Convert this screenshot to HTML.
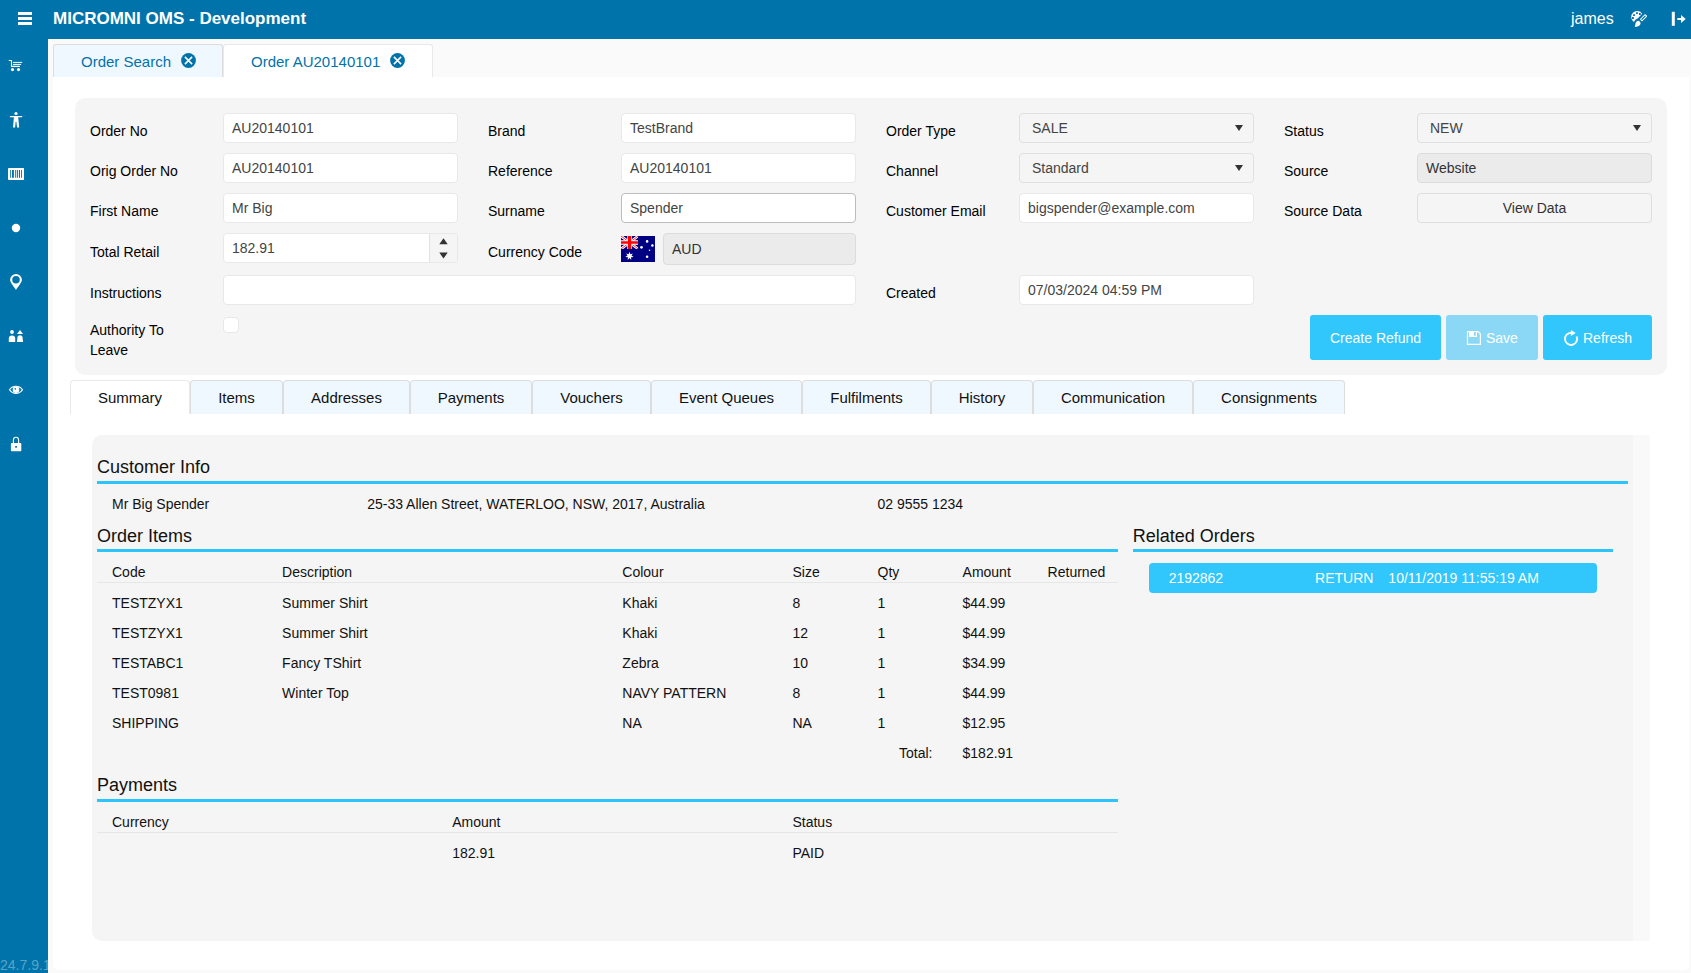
<!DOCTYPE html>
<html>
<head>
<meta charset="utf-8">
<title>MICROMNI OMS - Development</title>
<style>
*{box-sizing:border-box;margin:0;padding:0}
html,body{width:1691px;height:973px;overflow:hidden}
body{font-family:"Liberation Sans",sans-serif;font-size:14px;color:#000;background:#fafafa;position:relative}
.abs{position:absolute}
#hdr{position:absolute;left:0;top:0;width:1691px;height:39px;background:#0073aa}
#side{position:absolute;left:0;top:0;width:48px;height:973px;background:#0073aa;overflow:hidden}
#title{position:absolute;left:53px;top:9px;font-size:17px;font-weight:700;color:#fff;line-height:20px;white-space:nowrap}
#user{position:absolute;left:1571px;top:9px;font-size:16px;color:#fff;line-height:20px}
#ver{position:absolute;left:0;top:957px;font-size:14px;line-height:16px;color:rgba(255,255,255,.36);white-space:nowrap}
#panel{position:absolute;left:53px;top:77px;width:1636px;height:893px;background:#fff;border-radius:0 0 5px 5px}
.ttab{position:absolute;top:44px;height:33px;border:1px solid #ddd;border-bottom:none;border-radius:3px 3px 0 0;background:#f0f8ff;color:#0073aa;font-size:15px;line-height:18px;white-space:nowrap}
.ttab span{position:absolute;left:27px;top:8px}
.ttab svg{position:absolute;top:8px}
.ttab.act{background:#fff;border-color:#e9e9e9}
#fbox{position:absolute;left:75px;top:98px;width:1592px;height:277px;background:#f5f5f5;border-radius:10px}
.lbl{position:absolute;font-size:14px;line-height:20px;color:#000;white-space:nowrap}
.inp{position:absolute;height:30px;border:1px solid #e8e8e8;border-radius:4px;background:#fff;font-size:14px;line-height:20px;color:#444;padding:4px 8px;white-space:nowrap;overflow:hidden}
.inp.dis{background:#ebebeb;border-color:#dcdcdc;color:#333}
.inp.sel{background:#f5f5f5;border-color:#e0e0e0;padding-left:12px}
.inp.sel:after{content:"";position:absolute;right:10px;top:11px;border:4px solid transparent;border-top:6px solid #333;border-bottom:none}
.btn{position:absolute;top:315px;height:45px;background:#31c6fc;color:#fff;font-size:14px;line-height:47px;border-radius:3px;white-space:nowrap}
.btn.disb{background:#8ad8f6}
.stab{position:absolute;top:380px;height:34px;border:1px solid #ddd;border-bottom:none;border-radius:4px 4px 0 0;background:#f0f8ff;color:#111;font-size:15px;line-height:18px;text-align:center;padding-top:8px;white-space:nowrap}
.stab.act{background:#fff;border-color:#e9e9e9}
#sbox{position:absolute;left:92px;top:435px;width:1541px;height:506px;background:#f5f5f5;border-radius:10px 0 0 10px}
#strack{position:absolute;left:1633px;top:435px;width:17px;height:506px;background:#f9f9f9}
.h{position:absolute;font-size:18px;line-height:22px;color:#111;white-space:nowrap}
.bl{position:absolute;height:3px;background:#2dc4fb}
.gl{position:absolute;height:1px;background:#e6e6e6}
.t{position:absolute;font-size:14px;line-height:20px;color:#111;white-space:nowrap}
#rel{position:absolute;left:1148.67px;top:563px;width:448.33px;height:30px;background:#31c6fc;border-radius:4px;color:#fff}
#rel span{position:absolute;top:5px;font-size:14px;line-height:20px;white-space:nowrap}
</style>
</head>
<body>
<div id="hdr"></div>
<div id="side">
<div id="ver">24.7.9.1</div>
</div>
<div id="title">MICROMNI OMS - Development</div>
<div id="user">james</div>
<div id="panel"></div>
<div class="ttab" style="left:53px;width:170px"><span>Order Search</span><svg style="left:126.5px" width="15" height="15" viewBox="0 0 15 15"><circle cx="7.5" cy="7.5" r="7.4" fill="#0073aa"/><path d="M3.9 3.9 L11.1 11.1 M11.1 3.9 L3.9 11.1" stroke="#fff" stroke-width="1.55" fill="none"/></svg></div>
<div class="ttab act" style="left:223px;width:210px"><span>Order AU20140101</span><svg style="left:166px" width="15" height="15" viewBox="0 0 15 15"><circle cx="7.5" cy="7.5" r="7.4" fill="#0073aa"/><path d="M3.9 3.9 L11.1 11.1 M11.1 3.9 L3.9 11.1" stroke="#fff" stroke-width="1.55" fill="none"/></svg></div>

<div id="fbox"></div>
<div class="lbl" style="left:90px;top:121px">Order No</div>
<div class="lbl" style="left:488px;top:121px">Brand</div>
<div class="lbl" style="left:886px;top:121px">Order Type</div>
<div class="lbl" style="left:1284px;top:121px">Status</div>
<div class="lbl" style="left:90px;top:161px">Orig Order No</div>
<div class="lbl" style="left:488px;top:161px">Reference</div>
<div class="lbl" style="left:886px;top:161px">Channel</div>
<div class="lbl" style="left:1284px;top:161px">Source</div>
<div class="lbl" style="left:90px;top:201px">First Name</div>
<div class="lbl" style="left:488px;top:201px">Surname</div>
<div class="lbl" style="left:886px;top:201px">Customer Email</div>
<div class="lbl" style="left:1284px;top:201px">Source Data</div>
<div class="inp " style="left:223px;top:113px;width:235px;">AU20140101</div>
<div class="inp " style="left:621px;top:113px;width:235px;">TestBrand</div>
<div class="inp sel" style="left:1019px;top:113px;width:235px;">SALE</div>
<div class="inp sel" style="left:1417px;top:113px;width:235px;">NEW</div>
<div class="inp " style="left:223px;top:153px;width:235px;">AU20140101</div>
<div class="inp " style="left:621px;top:153px;width:235px;">AU20140101</div>
<div class="inp sel" style="left:1019px;top:153px;width:235px;">Standard</div>
<div class="inp dis" style="left:1417px;top:153px;width:235px;">Website</div>
<div class="inp " style="left:223px;top:193px;width:235px;">Mr Big</div>
<div class="inp " style="left:621px;top:193px;width:235px;border-color:#bdbdbd">Spender</div>
<div class="inp " style="left:1019px;top:193px;width:235px;">bigspender@example.com</div>
<div class="inp " style="left:1417px;top:193px;width:235px;background:#f5f5f5;border-color:#dedede;text-align:center;color:#333">View Data</div>
<div class="lbl" style="left:90px;top:242px">Total Retail</div>
<div class="lbl" style="left:488px;top:242px">Currency Code</div>
<div class="inp" style="left:223px;top:233px;width:235px;padding-top:4px">182.91<div style="position:absolute;right:0;top:0;width:28px;height:28px;background:#f5f5f5;border-left:1px solid #e2e2e2"><svg style="position:absolute;left:8.6px;top:4px" width="9" height="21" viewBox="0 0 9 21"><path d="M0.3 6.2 L4.5 0.3 L8.7 6.2 Z M0.3 14.6 L8.7 14.6 L4.5 20.5 Z" fill="#333"/></svg></div></div>
<svg class="abs" style="left:621px;top:236px" width="34" height="26" viewBox="0 0 34 26"><rect width="34" height="26" fill="#000082"/>
<svg x="0" y="0" width="17.2" height="13" viewBox="0 0 17.2 13"><path d="M0 0 L17.2 13 M17.2 0 L0 13" stroke="#fff" stroke-width="2.6"/><path d="M0 0 L17.2 13 M17.2 0 L0 13" stroke="#ff1a1a" stroke-width="0.9"/><path d="M8.6 0 V13 M0 6.5 H17.2" stroke="#fff" stroke-width="4.6"/><path d="M8.6 0 V13" stroke="#ff0000" stroke-width="3.3"/><path d="M0 6.5 H17.2" stroke="#ff0000" stroke-width="2.7"/></svg>
<path d="M8.5 15.8 l0.9 2.5 2.5-0.9-1.4 2.2 2.2 1.4-2.7 0.3 0.3 2.7-1.8-2-1.8 2 0.3-2.7-2.7-0.3 2.2-1.4-1.4-2.2 2.5 0.9 Z" fill="#fff"/>
<circle cx="26.1" cy="5.4" r="1.3" fill="#fff"/><circle cx="31.4" cy="9.6" r="1.25" fill="#fff"/><circle cx="20.5" cy="11.3" r="1.35" fill="#fff"/><circle cx="28.5" cy="14.2" r="0.75" fill="#fff"/><circle cx="26.1" cy="20.8" r="1.3" fill="#fff"/></svg>
<div class="inp dis" style="left:663px;top:233px;width:193px;height:32px;padding-top:5px">AUD</div>
<div class="lbl" style="left:90px;top:283px">Instructions</div>
<div class="inp " style="left:223px;top:275px;width:633px;"></div>
<div class="lbl" style="left:886px;top:283px">Created</div>
<div class="inp " style="left:1019px;top:275px;width:235px;">07/03/2024 04:59 PM</div>
<div class="lbl" style="left:90px;top:320px">Authority To</div>
<div class="lbl" style="left:90px;top:340px">Leave</div>
<div class="abs" style="left:223px;top:317px;width:16px;height:16px;background:#fff;border:1px solid #e8e8e8;border-radius:4px"></div>
<div class="btn" style="left:1310px;width:131px;padding-left:20px">Create Refund</div>
<div class="btn disb" style="left:1446px;width:92px;padding-left:40px"><svg class="abs" style="left:20px;top:15px" width="16" height="16" viewBox="0 0 16 16"><path d="M1.5 1.5 H12 L14.4 3.9 V14.4 H1.5 Z" stroke="#fff" stroke-width="1.2" fill="none" stroke-linejoin="round"/><path d="M3.1 1.5 H11 V7 H3.1 Z M8 2.1 V5.8 H9.8 V2.1 Z" fill="#fff" fill-rule="evenodd"/></svg>Save</div>
<div class="btn" style="left:1543px;width:109px;padding-left:40px"><svg class="abs" style="left:19px;top:14px" width="18" height="18" viewBox="0 0 18 18"><path d="M9.4 3.85 A6.05 6.05 0 1 0 14.6 7.5" stroke="#fff" stroke-width="1.9" fill="none"/><path d="M8.9 1.1 L13.7 3.9 L8.9 7 Z" fill="#fff"/></svg>Refresh</div>
<div class="stab act" style="left:70px;width:120px">Summary</div>
<div class="stab" style="left:190px;width:93px">Items</div>
<div class="stab" style="left:283px;width:127px">Addresses</div>
<div class="stab" style="left:410px;width:122px">Payments</div>
<div class="stab" style="left:532px;width:119px">Vouchers</div>
<div class="stab" style="left:651px;width:151px">Event Queues</div>
<div class="stab" style="left:802px;width:129px">Fulfilments</div>
<div class="stab" style="left:931px;width:102px">History</div>
<div class="stab" style="left:1033px;width:160px">Communication</div>
<div class="stab" style="left:1193px;width:152px">Consignments</div>
<div id="sbox"></div><div id="strack"></div>
<div class="h" style="left:97px;top:456px">Customer Info</div>
<div class="bl" style="left:97px;top:481px;width:1531px"></div>
<div class="t" style="left:112px;top:494px;">Mr Big Spender</div>
<div class="t" style="left:367.17px;top:494px;">25-33 Allen Street, WATERLOO, NSW, 2017, Australia</div>
<div class="t" style="left:877.50px;top:494px;">02 9555 1234</div>
<div class="h" style="left:97px;top:525px">Order Items</div>
<div class="bl" style="left:97px;top:549px;width:1020.67px"></div>
<div class="h" style="left:1132.67px;top:525px">Related Orders</div>
<div class="bl" style="left:1132.67px;top:549px;width:480.33px"></div>
<div class="t" style="left:112px;top:562px;">Code</div>
<div class="t" style="left:282.11px;top:562px;">Description</div>
<div class="t" style="left:622.33px;top:562px;">Colour</div>
<div class="t" style="left:792.45px;top:562px;">Size</div>
<div class="t" style="left:877.50px;top:562px;">Qty</div>
<div class="t" style="left:962.56px;top:562px;">Amount</div>
<div class="t" style="left:1047.61px;top:562px;">Returned</div>
<div class="gl" style="left:97px;top:582px;width:1020.67px"></div>
<div class="t" style="left:112px;top:593px;">TESTZYX1</div>
<div class="t" style="left:282.11px;top:593px;">Summer Shirt</div>
<div class="t" style="left:622.33px;top:593px;">Khaki</div>
<div class="t" style="left:792.45px;top:593px;">8</div>
<div class="t" style="left:877.50px;top:593px;">1</div>
<div class="t" style="left:962.56px;top:593px;">$44.99</div>
<div class="t" style="left:112px;top:623px;">TESTZYX1</div>
<div class="t" style="left:282.11px;top:623px;">Summer Shirt</div>
<div class="t" style="left:622.33px;top:623px;">Khaki</div>
<div class="t" style="left:792.45px;top:623px;">12</div>
<div class="t" style="left:877.50px;top:623px;">1</div>
<div class="t" style="left:962.56px;top:623px;">$44.99</div>
<div class="t" style="left:112px;top:653px;">TESTABC1</div>
<div class="t" style="left:282.11px;top:653px;">Fancy TShirt</div>
<div class="t" style="left:622.33px;top:653px;">Zebra</div>
<div class="t" style="left:792.45px;top:653px;">10</div>
<div class="t" style="left:877.50px;top:653px;">1</div>
<div class="t" style="left:962.56px;top:653px;">$34.99</div>
<div class="t" style="left:112px;top:683px;">TEST0981</div>
<div class="t" style="left:282.11px;top:683px;">Winter Top</div>
<div class="t" style="left:622.33px;top:683px;">NAVY PATTERN</div>
<div class="t" style="left:792.45px;top:683px;">8</div>
<div class="t" style="left:877.50px;top:683px;">1</div>
<div class="t" style="left:962.56px;top:683px;">$44.99</div>
<div class="t" style="left:112px;top:713px;">SHIPPING</div>
<div class="t" style="left:622.33px;top:713px;">NA</div>
<div class="t" style="left:792.45px;top:713px;">NA</div>
<div class="t" style="left:877.50px;top:713px;">1</div>
<div class="t" style="left:962.56px;top:713px;">$12.95</div>
<div class="t" style="left:862.5px;width:70px;text-align:right;top:743px">Total:</div>
<div class="t" style="left:962.56px;top:743px;">$182.91</div>
<div class="h" style="left:97px;top:774px">Payments</div>
<div class="bl" style="left:97px;top:799px;width:1020.67px"></div>
<div class="t" style="left:112px;top:812px;">Currency</div>
<div class="t" style="left:452.22px;top:812px;">Amount</div>
<div class="t" style="left:792.45px;top:812px;">Status</div>
<div class="gl" style="left:97px;top:832px;width:1020.67px"></div>
<div class="t" style="left:452.22px;top:843px;">182.91</div>
<div class="t" style="left:792.45px;top:843px;">PAID</div>
<div id="rel"><span style="left:20px">2192862</span><span style="left:166.4px">RETURN</span><span style="left:239.7px">10/11/2019 11:55:19 AM</span></div>
<svg class="abs" style="left:18px;top:12px" width="14" height="13" viewBox="0 0 14 13"><path d="M0 0h14v3H0zM0 5h14v3H0zM0 10h14v3H0z" fill="#fff"/></svg>
<svg class="abs" style="left:8px;top:59px" width="16" height="13" viewBox="0 0 16 13"><path d="M0.8 1.5 H3.5 V7.4 H11.9" stroke="#fff" stroke-width="1.1" fill="none"/><path d="M5 3.4 H14.2 M5 5.4 H13.1" stroke="#fff" stroke-width="1" fill="none"/><circle cx="4.5" cy="10.6" r="1.55" fill="#fff"/><circle cx="10.5" cy="10.6" r="1.55" fill="#fff"/></svg>
<svg class="abs" style="left:9px;top:111px" width="14" height="17" viewBox="0 0 14 17"><circle cx="7" cy="2.5" r="1.6" fill="#fff"/><path d="M0.9 4.9 H13.2 V6.2 H9.2 L10.2 16.4 H8.1 L7.3 10.6 H6.7 L6.1 16.4 H4 L4.9 6.2 H0.9 Z" fill="#fff"/></svg>
<svg class="abs" style="left:8px;top:168px" width="16" height="12" viewBox="0 0 16 12"><rect x="0" y="0" width="16.2" height="12" rx="1" fill="#fff"/><path d="M2.2 2h0.8v7.8H2.2zM4 2h1.9v7.8H4zM7.2 2h1v7.8h-1zM9.1 2h1v7.8h-1zM11 2h1v7.8h-1zM13.1 2h0.9v7.8h-0.9z" fill="#0073aa"/></svg>
<svg class="abs" style="left:11px;top:223px" width="10" height="10" viewBox="0 0 10 10"><circle cx="5" cy="5" r="4.2" fill="#fff"/></svg>
<svg class="abs" style="left:9px;top:273px" width="14" height="18" viewBox="0 0 14 18"><path fill-rule="evenodd" d="M7 0.9 A5.9 5.9 0 0 1 12.9 6.8 C12.9 9.6 9.2 13.6 7 16.9 C4.8 13.6 1.1 9.6 1.1 6.8 A5.9 5.9 0 0 1 7 0.9 Z M7 2.9 A3.75 3.75 0 1 0 7 10.4 A3.75 3.75 0 1 0 7 2.9 Z" fill="#fff"/></svg>
<svg class="abs" style="left:8px;top:329px" width="16" height="14" viewBox="0 0 16 14"><circle cx="4" cy="3" r="1.9" fill="#fff"/><path d="M0.8 13.1 V9.6 A3.2 3.2 0 0 1 7.2 9.6 V13.1 Z" fill="#fff"/><path d="M12 0.9 L15 4.9 H9 Z" fill="#fff"/><path d="M8.9 13.1 L9.4 8.9 A2.6 2.6 0 0 1 14.6 8.9 L15.1 13.1 Z" fill="#fff"/></svg>
<svg class="abs" style="left:8px;top:384px" width="16" height="11" viewBox="0 0 16 11"><path fill-rule="evenodd" d="M0.8 5.8 C3 2.6 5.4 1.7 8 1.7 C10.6 1.7 13 2.6 15.2 5.8 C13 9 10.6 9.9 8 9.9 C5.4 9.9 3 9 0.8 5.8 Z M2.2 5.8 C4 8.2 6 8.9 8 8.9 C10 8.9 12 8.2 13.8 5.8 C12 3.4 10 2.7 8 2.7 C6 2.7 4 3.4 2.2 5.8 Z" fill="#fff"/><circle cx="8" cy="5.8" r="3.3" fill="#fff"/><rect x="6.6" y="4.2" width="1.4" height="1.4" fill="#0073aa"/></svg>
<svg class="abs" style="left:10px;top:436px" width="12" height="16" viewBox="0 0 12 16"><path d="M3.4 7.2 V4.2 A2.6 2.9 0 0 1 8.6 4.2 V7.2" stroke="#fff" stroke-width="1.1" fill="none"/><rect x="0.9" y="6.9" width="10.4" height="8.3" rx="0.8" fill="#fff"/><rect x="5.2" y="10" width="1.7" height="1.7" fill="#0073aa"/></svg>
<svg class="abs" style="left:1624px;top:6px" width="30" height="26" viewBox="0 0 30 26"><path fill-rule="evenodd" d="M9.9 16 A6 6 0 1 1 18.2 7.7 L13.9 12.3 Q10.9 13.2 9.9 16 Z M12.1 6.2 h1.8 v1.8 h-1.8 Z M15 7.1 h1.8 v1.8 h-1.8 Z M9.1 8.2 h1.8 v1.8 h-1.8 Z M8 11.1 h1.8 v1.8 h-1.8 Z" fill="#fff"/><rect x="16.3" y="10.6" width="6.5" height="2.2" rx="0.3" transform="rotate(-45 19.55 11.7)" fill="none" stroke="#fff" stroke-width="1"/><path d="M10.7 21 C11.6 19.2 11 16.2 13.2 15 A2.55 2.55 0 0 1 16.5 18 C15.6 20.3 13 20.8 10.7 21 Z" fill="#fff"/></svg>
<svg class="abs" style="left:1671px;top:11px" width="16" height="16" viewBox="0 0 16 16"><path d="M0.8 0.8 h3 v14 h-3 Z" fill="#fff"/><path d="M6.3 6.9 H10 V3.9 L14.7 7.95 L10 12 V9.1 H6.3 Z" fill="#fff"/></svg>
</body>
</html>
